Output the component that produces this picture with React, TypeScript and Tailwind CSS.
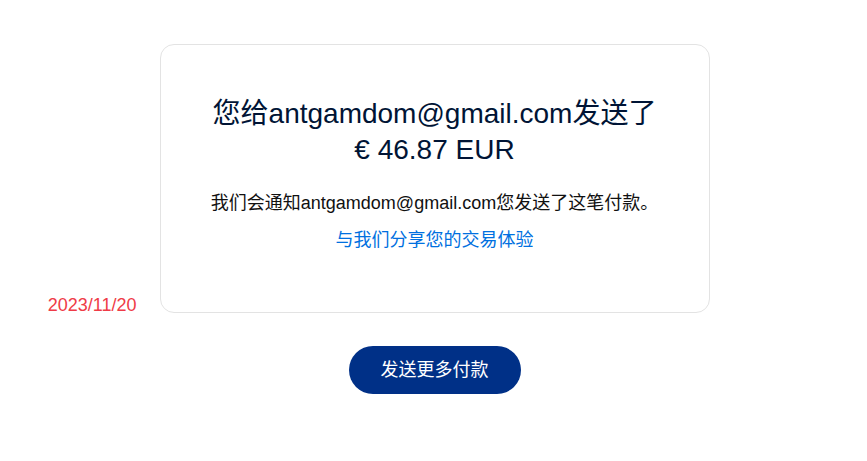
export default function App() {
  return (
    <div
      className="min-h-[461px] w-full bg-white pt-[44px]"
      style={{ fontFamily: '"Liberation Sans", "Noto Sans CJK SC", sans-serif' }}
    >
      <div className="relative mx-auto w-[550px] translate-x-[1px]">
        <span className="absolute right-[calc(100%+23px)] bottom-[-6px] whitespace-nowrap text-[18px] leading-[27px] text-[#ef3b47]">
          2023/11/20
        </span>
        <div className="flex h-[269px] flex-col items-center rounded-[14px] border border-[#e3e3e3] bg-white pt-[51px] text-center">
          <h1 className="text-[28px] leading-[36px] text-[#001435]">
            您给antgamdom@gmail.com发送了
            <br />€ 46.87 EUR
          </h1>
          <p className="mt-[22px] text-[18px] leading-[27px] text-[#111]">
            我们会通知antgamdom@gmail.com您发送了这笔付款。
          </p>
          <a href="#" className="mt-[10px] text-[18px] leading-[27px] text-[#0070e0]">
            与我们分享您的交易体验
          </a>
        </div>
      </div>
      <div className="mt-[33px] flex justify-center">
        <button className="h-[48px] w-[172px] translate-x-[1px] rounded-full bg-[#003087] text-[18px] text-white">
          发送更多付款
        </button>
      </div>
    </div>
  );
}
